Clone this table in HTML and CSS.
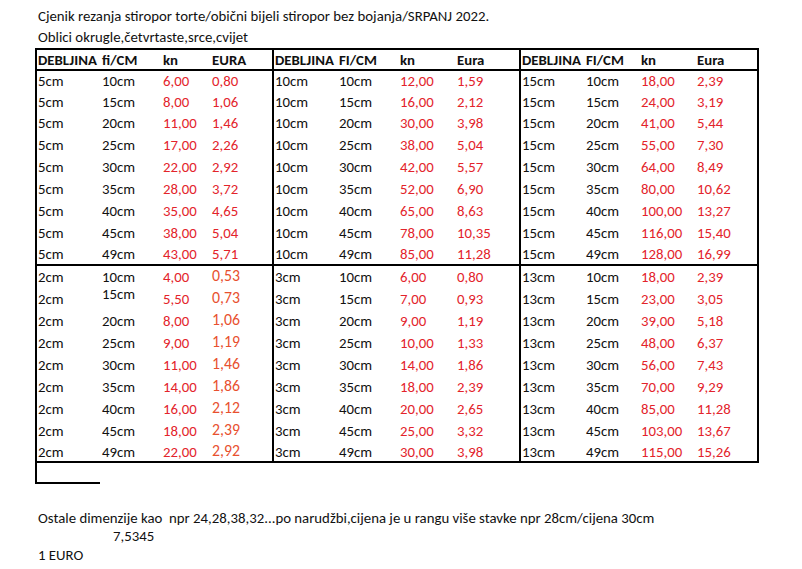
FILE: index.html
```html
<!DOCTYPE html>
<html lang="hr">
<head>
<meta charset="utf-8">
<title>Cjenik rezanja stiropor</title>
<link rel="stylesheet" href="styles.css">
</head>
<body>
<div class="sheet">
  <div class="title">
    <div class="line">Cjenik rezanja stiropor torte/obični bijeli stiropor bez bojanja/SRPANJ 2022.</div>
    <div class="line">Oblici okrugle,četvrtaste,srce,cvijet</div>
  </div>

  <div class="grid">
    <div class="c h">DEBLJINA</div><div class="c h">fi/CM</div><div class="c h">kn</div><div class="c h d">EURA</div>
    <div class="c h">DEBLJINA</div><div class="c h">FI/CM</div><div class="c h">kn</div><div class="c h d">Eura</div>
    <div class="c h">DEBLJINA</div><div class="c h">FI/CM</div><div class="c h">kn</div><div class="c h">Eura</div>

    <div class="c">5cm</div><div class="c">10cm</div><div class="c r">6,00</div><div class="c r d">0,80</div>
    <div class="c">10cm</div><div class="c">10cm</div><div class="c r">12,00</div><div class="c r d">1,59</div>
    <div class="c">15cm</div><div class="c">10cm</div><div class="c r">18,00</div><div class="c r">2,39</div>

    <div class="c">5cm</div><div class="c">15cm</div><div class="c r">8,00</div><div class="c r d">1,06</div>
    <div class="c">10cm</div><div class="c">15cm</div><div class="c r">16,00</div><div class="c r d">2,12</div>
    <div class="c">15cm</div><div class="c">15cm</div><div class="c r">24,00</div><div class="c r">3,19</div>

    <div class="c">5cm</div><div class="c">20cm</div><div class="c r">11,00</div><div class="c r d">1,46</div>
    <div class="c">10cm</div><div class="c">20cm</div><div class="c r">30,00</div><div class="c r d">3,98</div>
    <div class="c">15cm</div><div class="c">20cm</div><div class="c r">41,00</div><div class="c r">5,44</div>

    <div class="c">5cm</div><div class="c">25cm</div><div class="c r">17,00</div><div class="c r d">2,26</div>
    <div class="c">10cm</div><div class="c">25cm</div><div class="c r">38,00</div><div class="c r d">5,04</div>
    <div class="c">15cm</div><div class="c">25cm</div><div class="c r">55,00</div><div class="c r">7,30</div>

    <div class="c">5cm</div><div class="c">30cm</div><div class="c r">22,00</div><div class="c r d">2,92</div>
    <div class="c">10cm</div><div class="c">30cm</div><div class="c r">42,00</div><div class="c r d">5,57</div>
    <div class="c">15cm</div><div class="c">30cm</div><div class="c r">64,00</div><div class="c r">8,49</div>

    <div class="c">5cm</div><div class="c">35cm</div><div class="c r">28,00</div><div class="c r d">3,72</div>
    <div class="c">10cm</div><div class="c">35cm</div><div class="c r">52,00</div><div class="c r d">6,90</div>
    <div class="c">15cm</div><div class="c">35cm</div><div class="c r">80,00</div><div class="c r">10,62</div>

    <div class="c">5cm</div><div class="c">40cm</div><div class="c r">35,00</div><div class="c r d">4,65</div>
    <div class="c">10cm</div><div class="c">40cm</div><div class="c r">65,00</div><div class="c r d">8,63</div>
    <div class="c">15cm</div><div class="c">40cm</div><div class="c r">100,00</div><div class="c r">13,27</div>

    <div class="c">5cm</div><div class="c">45cm</div><div class="c r">38,00</div><div class="c r d">5,04</div>
    <div class="c">10cm</div><div class="c">45cm</div><div class="c r">78,00</div><div class="c r d">10,35</div>
    <div class="c">15cm</div><div class="c">45cm</div><div class="c r">116,00</div><div class="c r">15,40</div>

    <div class="c s">5cm</div><div class="c s">49cm</div><div class="c s r">43,00</div><div class="c s r d">5,71</div>
    <div class="c s">10cm</div><div class="c s">49cm</div><div class="c s r">85,00</div><div class="c s r d">11,28</div>
    <div class="c s">15cm</div><div class="c s">49cm</div><div class="c s r">128,00</div><div class="c s r">16,99</div>

    <div class="c">2cm</div><div class="c">10cm</div><div class="c r">4,00</div><div class="c o d">0,53</div>
    <div class="c">3cm</div><div class="c">10cm</div><div class="c r">6,00</div><div class="c r d">0,80</div>
    <div class="c">13cm</div><div class="c">10cm</div><div class="c r">18,00</div><div class="c r">2,39</div>

    <div class="c">2cm</div><div class="c up">15cm</div><div class="c r">5,50</div><div class="c o d">0,73</div>
    <div class="c">3cm</div><div class="c">15cm</div><div class="c r">7,00</div><div class="c r d">0,93</div>
    <div class="c">13cm</div><div class="c">15cm</div><div class="c r">23,00</div><div class="c r">3,05</div>

    <div class="c">2cm</div><div class="c">20cm</div><div class="c r">8,00</div><div class="c o d">1,06</div>
    <div class="c">3cm</div><div class="c">20cm</div><div class="c r">9,00</div><div class="c r d">1,19</div>
    <div class="c">13cm</div><div class="c">20cm</div><div class="c r">39,00</div><div class="c r">5,18</div>

    <div class="c">2cm</div><div class="c">25cm</div><div class="c r">9,00</div><div class="c o d">1,19</div>
    <div class="c">3cm</div><div class="c">25cm</div><div class="c r">10,00</div><div class="c r d">1,33</div>
    <div class="c">13cm</div><div class="c">25cm</div><div class="c r">48,00</div><div class="c r">6,37</div>

    <div class="c">2cm</div><div class="c">30cm</div><div class="c r">11,00</div><div class="c o d">1,46</div>
    <div class="c">3cm</div><div class="c">30cm</div><div class="c r">14,00</div><div class="c r d">1,86</div>
    <div class="c">13cm</div><div class="c">30cm</div><div class="c r">56,00</div><div class="c r">7,43</div>

    <div class="c">2cm</div><div class="c">35cm</div><div class="c r">14,00</div><div class="c o d">1,86</div>
    <div class="c">3cm</div><div class="c">35cm</div><div class="c r">18,00</div><div class="c r d">2,39</div>
    <div class="c">13cm</div><div class="c">35cm</div><div class="c r">70,00</div><div class="c r">9,29</div>

    <div class="c">2cm</div><div class="c">40cm</div><div class="c r">16,00</div><div class="c o d">2,12</div>
    <div class="c">3cm</div><div class="c">40cm</div><div class="c r">20,00</div><div class="c r d">2,65</div>
    <div class="c">13cm</div><div class="c">40cm</div><div class="c r">85,00</div><div class="c r">11,28</div>

    <div class="c">2cm</div><div class="c">45cm</div><div class="c r">18,00</div><div class="c o d">2,39</div>
    <div class="c">3cm</div><div class="c">45cm</div><div class="c r">25,00</div><div class="c r d">3,32</div>
    <div class="c">13cm</div><div class="c">45cm</div><div class="c r">103,00</div><div class="c r">13,67</div>

    <div class="c">2cm</div><div class="c">49cm</div><div class="c r">22,00</div><div class="c o d">2,92</div>
    <div class="c">3cm</div><div class="c">49cm</div><div class="c r">30,00</div><div class="c r d">3,98</div>
    <div class="c">13cm</div><div class="c">49cm</div><div class="c r">115,00</div><div class="c r">15,26</div>
  </div>

  <div class="bracket"></div>

  <div class="notes">
    <div class="note n1">Ostale dimenzije kao&nbsp; npr 24,28,38,32...po narudžbi,cijena je u rangu više stavke npr 28cm/cijena 30cm</div>
    <div class="note n2">7,5345</div>
    <div class="note n3">1 EURO</div>
  </div>
</div>
</body>
</html>
```

FILE: styles.css
```css
* {
  box-sizing: border-box;
}

html, body {
  margin: 0;
  padding: 0;
  background: #ffffff;
}

body {
  font-family: "Carlito", "Lato", "Liberation Sans", sans-serif;
  font-size: 14.8px;
  color: #111111;
}

.sheet {
  padding: 6px 0 0 35px;
}

.title {
  padding-left: 3px;
}

.title .line {
  height: 21px;
  line-height: 21px;
  white-space: nowrap;
}

.grid {
  display: grid;
  width: 724px;
  border: 2px solid #000000;
  grid-template-columns: 64px 61px 49px 63px 64px 61px 57px 65px 64px 55px 56px 61px;
  grid-template-rows: 21px 20px 21px 22px 22px 22px 22px 22px 22px 22px 22px 22px 22px 22px 22px 22px 22px 22px 19px;
}

.c {
  display: flex;
  align-items: center;
  padding-left: 1px;
  white-space: nowrap;
  overflow: visible;
}

.h {
  font-weight: bold;
  border-bottom: 2px solid #000000;
  padding-top: 1px;
}

.d {
  border-right: 2px solid #000000;
}

.s {
  border-bottom: 2px solid #000000;
}

.r {
  color: #e3232b;
}

.o {
  color: #e8502f;
  font-size: 15.8px;
  padding-bottom: 3px;
}

.up {
  padding-bottom: 10px;
}

.bracket {
  width: 65px;
  height: 21px;
  border-left: 2px solid #000000;
  border-bottom: 2px solid #000000;
}

.notes {
  padding-top: 25px;
  padding-left: 3px;
}

.note {
  white-space: nowrap;
}

.n1 {
  height: 18px;
  line-height: 18px;
}

.n2 {
  height: 18px;
  line-height: 18px;
  padding-left: 75px;
}

.n3 {
  height: 20px;
  line-height: 20px;
}
```
